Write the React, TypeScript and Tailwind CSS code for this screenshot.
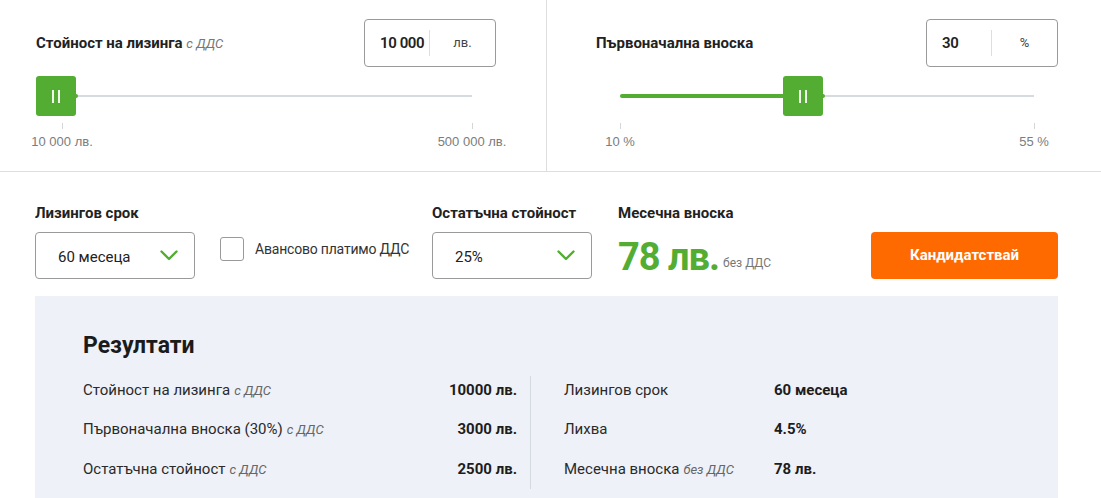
import React from "react";

const GREEN = "bg-[#52ad32]";

function Chevron() {
  return (
    <svg width="18" height="11" viewBox="0 0 18 11" fill="none">
      <path d="M1.5 1.5 L9 9 L16.5 1.5" stroke="#52ad32" strokeWidth="2.4" strokeLinecap="round" strokeLinejoin="round" />
    </svg>
  );
}

function Thumb() {
  return (
    <div className={`flex h-10 w-10 items-center justify-center gap-[4px] rounded-[3px] ${GREEN}`}>
      <span className="h-[13px] w-[2px] bg-white/90" />
      <span className="h-[13px] w-[2px] bg-white/90" />
    </div>
  );
}

function Tick({ label }: { label: string }) {
  return (
    <div className="flex w-0 flex-col items-center">
      <span className="h-[6px] w-px bg-[#d5d5d5]" />
      <span className="mt-[3px] whitespace-nowrap font-['Liberation_Sans',Arial,sans-serif] text-[13px] text-[#7c7c7c]">{label}</span>
    </div>
  );
}

function InputBox({ value, unit }: { value: string; unit: string }) {
  return (
    <div className="flex h-12 w-[132px] shrink-0 items-center rounded-[4px] border border-[#9a9a9a]">
      <div className="w-16 shrink-0 whitespace-nowrap pl-[15px] text-[15px] font-semibold tracking-[-0.4px] text-[#222]">{value}</div>
      <div className="h-[26px] w-px shrink-0 bg-[#dedede]" />
      <div className="flex-1 text-center text-[13px] text-[#444]">{unit}</div>
    </div>
  );
}

function Select({ value }: { value: string }) {
  return (
    <div className="flex h-[47px] w-[160px] items-center justify-between rounded-[4px] border border-[#9a9a9a] pl-[22px] pr-[16px]">
      <span className="mt-[3px] text-[15px] text-[#222]">{value}</span>
      <Chevron />
    </div>
  );
}

function Row({ label, note, value, right }: { label: string; note?: string; value: string; right?: boolean }) {
  return (
    <div className="flex h-[39.5px] items-center text-[15px] text-[#2a2a2a]">
      <span className={right ? "w-[210px]" : "flex-1"}>
        {label}
        {note && <i className="ml-1 text-[13px] text-[#666]">{note}</i>}
      </span>
      <span className="font-bold text-[#1d1d1d]">{value}</span>
    </div>
  );
}

export default function App() {
  return (
    <div className="h-[498px] w-[1101px] overflow-hidden bg-white font-['Roboto','Noto_Sans',sans-serif]">
      {/* sliders */}
      <div className="flex h-[172px] border-b border-[#dedede]">
        <div className="w-[547px] shrink-0 border-r border-[#dedede] pl-9 pr-[50px] pt-[19px]">
          <div className="flex h-12 items-center justify-between">
            <div className="text-[15px] font-bold text-[#222]">
              Стойност на лизинга <i className="text-[13px] font-normal text-[#777]">с ДДС</i>
            </div>
            <InputBox value="10 000" unit="лв." />
          </div>
          <div className="relative mt-[9px] h-10">
            <div className="absolute left-[26px] right-[24px] top-[19px] h-[2px] bg-[#d6dbe0]" />
            <div className="absolute left-0 top-0">
              <Thumb />
            </div>
            <div className={`absolute left-[38px] top-[18px] h-[4px] w-[4px] rounded-full ${GREEN}`} />
          </div>
          <div className="mt-[7px] flex justify-between pl-[26px] pr-[24px]">
            <Tick label="10 000 лв." />
            <Tick label="500 000 лв." />
          </div>
        </div>
        <div className="flex-1 pl-[49px] pr-[43px] pt-[19px]">
          <div className="flex h-12 items-center justify-between">
            <div className="text-[15px] font-bold text-[#222]">Първоначална вноска</div>
            <InputBox value="30" unit="%" />
          </div>
          <div className="relative mt-[9px] h-10">
            <div className="absolute left-[24px] right-[24px] top-[19px] h-[2px] bg-[#d6dbe0]" />
            <div className={`absolute left-[24px] top-[18px] h-[4px] w-[190px] rounded-full ${GREEN}`} />
            <div className="absolute left-[187px] top-0">
              <Thumb />
            </div>
            <div className={`absolute left-[225px] top-[18px] h-[4px] w-[4px] rounded-full ${GREEN}`} />
          </div>
          <div className="mt-[7px] flex justify-between pl-[24px] pr-[24px]">
            <Tick label="10 %" />
            <Tick label="55 %" />
          </div>
        </div>
      </div>

      {/* options */}
      <div className="flex items-start pl-[35px] pt-[31px]">
        <div className="w-[160px] shrink-0">
          <div className="mb-[9px] text-[15px] font-bold leading-5 text-[#222]">Лизингов срок</div>
          <Select value="60 месеца" />
        </div>
        <div className="ml-[25px] mt-[34px] flex w-[212px] shrink-0 gap-[11px]">
          <div className="h-6 w-6 shrink-0 rounded-[3px] border border-[#9a9a9a]" />
          <span className="mt-[2px] whitespace-nowrap text-[14px] tracking-[-0.2px] text-[#333]">Авансово платимо ДДС</span>
        </div>
        <div className="w-[160px] shrink-0">
          <div className="mb-[9px] whitespace-nowrap text-[15px] font-bold leading-5 text-[#222]">Остатъчна стойност</div>
          <Select value="25%" />
        </div>
        <div className="ml-[26px] w-[253px] shrink-0">
          <div className="mb-[9px] text-[15px] font-bold leading-5 text-[#222]">Месечна вноска</div>
          <div className="flex h-[47px] items-end pb-[3px]">
            <span className="text-[38px] font-bold leading-none tracking-[-1px] text-[#52ad32]">78 лв.</span>
            <span className="mb-[4px] ml-[4px] text-[12px] text-[#777]">без ДДС</span>
          </div>
        </div>
        <div className="mt-[29px] flex h-[47px] w-[187px] shrink-0 items-center justify-center rounded-[4px] bg-[#ff6a00] text-[15px] font-bold text-white">
          Кандидатствай
        </div>
      </div>

      {/* results */}
      <div className="ml-[35px] mt-[17px] h-[300px] w-[1023px] bg-[#eef1f8] pl-[48px] pt-[36px]">
        <div className="text-[23px] font-bold leading-7 text-[#1b1b1b]">Резултати</div>
        <div className="mt-[10px] flex">
          <div className="w-[447px] pr-[13px]">
            <Row label="Стойност на лизинга" note="с ДДС" value="10000 лв." />
            <Row label="Първоначална вноска (30%)" note="с ДДС" value="3000 лв." />
            <Row label="Остатъчна стойност" note="с ДДС" value="2500 лв." />
          </div>
          <div className="mt-[6px] w-px self-stretch bg-[#d5d9e0]" />
          <div className="pl-[33px]">
            <Row label="Лизингов срок" value="60 месеца" right />
            <Row label="Лихва" value="4.5%" right />
            <Row label="Месечна вноска" note="без ДДС" value="78 лв." right />
          </div>
        </div>
      </div>
    </div>
  );
}
